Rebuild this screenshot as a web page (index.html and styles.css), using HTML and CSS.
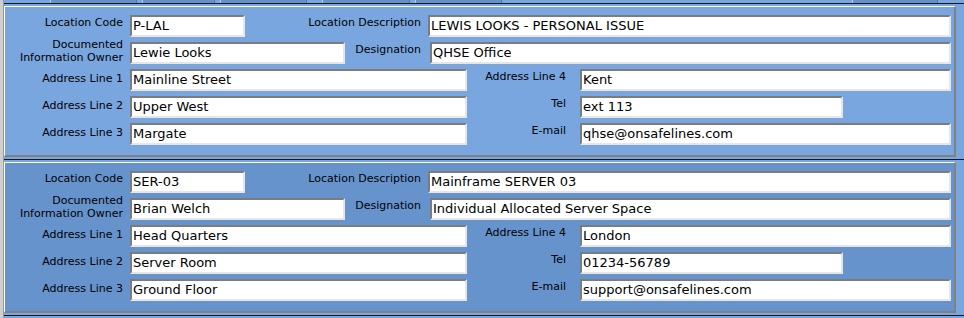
FILE: index.html
```html
<!DOCTYPE html>
<html>
<head>
<meta charset="utf-8">
<link rel="stylesheet" href="styles.css">
</head>
<body>
<div class="screen">
  <div class="main">
    <div class="tabs">
      <span class="tab t1"></span><span class="tab t2"></span><span class="tab t3"></span><span class="tab t4"></span><span class="tab t5"></span><span class="tab t6"></span>
    </div>

    <div class="record">
      <div class="panel">
        <div class="row">
          <div class="lab l1">Location Code</div>
          <div class="field w-code">P-LAL</div>
          <div class="lab l-desc">Location Description</div>
          <div class="field w-desc">LEWIS LOOKS - PERSONAL ISSUE</div>
        </div>
        <div class="row">
          <div class="lab l1 two">Documented<br>Information Owner</div>
          <div class="field w-owner">Lewie Looks</div>
          <div class="lab l-desig">Designation</div>
          <div class="field w-desig">QHSE Office</div>
        </div>
        <div class="row">
          <div class="lab l1 low">Address Line 1</div>
          <div class="field w-addr">Mainline Street</div>
          <div class="lab l-addr">Address Line 4</div>
          <div class="field w-right">Kent</div>
        </div>
        <div class="row">
          <div class="lab l1 low">Address Line 2</div>
          <div class="field w-addr">Upper West</div>
          <div class="lab l-addr">Tel</div>
          <div class="field w-tel">ext 113</div>
        </div>
        <div class="row">
          <div class="lab l1 low">Address Line 3</div>
          <div class="field w-addr">Margate</div>
          <div class="lab l-addr">E-mail</div>
          <div class="field w-right">qhse@onsafelines.com</div>
        </div>
      </div>
    </div>

    <div class="record">
      <div class="panel dark">
        <div class="row">
          <div class="lab l1">Location Code</div>
          <div class="field w-code">SER-03</div>
          <div class="lab l-desc">Location Description</div>
          <div class="field w-desc">Mainframe SERVER 03</div>
        </div>
        <div class="row">
          <div class="lab l1 two">Documented<br>Information Owner</div>
          <div class="field w-owner">Brian Welch</div>
          <div class="lab l-desig">Designation</div>
          <div class="field w-desig">Individual Allocated Server Space</div>
        </div>
        <div class="row">
          <div class="lab l1 low">Address Line 1</div>
          <div class="field w-addr">Head Quarters</div>
          <div class="lab l-addr">Address Line 4</div>
          <div class="field w-right">London</div>
        </div>
        <div class="row">
          <div class="lab l1 low">Address Line 2</div>
          <div class="field w-addr">Server Room</div>
          <div class="lab l-addr">Tel</div>
          <div class="field w-tel">01234-56789</div>
        </div>
        <div class="row">
          <div class="lab l1 low">Address Line 3</div>
          <div class="field w-addr">Ground Floor</div>
          <div class="lab l-addr">E-mail</div>
          <div class="field w-right">support@onsafelines.com</div>
        </div>
      </div>
    </div>

    <div class="record">
      <div class="panel light"></div>
    </div>
  </div>
</div>
</body>
</html>
```
FILE: styles.css
```css
html, body {
  margin: 0;
  padding: 0;
  overflow: hidden;
  background: #7aa6df;
}
.screen {
  width: 964px;
  height: 318px;
  overflow: hidden;
  border-left: 3px solid #cfcfcf;
  box-sizing: border-box;
  font-family: "DejaVu Sans", "Liberation Sans", sans-serif;
  color: #000;
}
.main {
  border-left: 1px solid #9a9a9a;
  background: #7aa6df;
  height: 100%;
}
.tabs {
  display: flex;
  height: 3px;
}
.tab {
  display: block;
  height: 3px;
  background: #6891c9;
  border-left: 1px solid #b8cdea;
  border-right: 1px solid #4f78b0;
  box-sizing: border-box;
}
.t1 { margin-left: 46px; width: 87px; }
.t2 { margin-left: 5px; width: 73px; }
.t3 { margin-left: 5px; width: 87px; }
.t4 { margin-left: 15px; width: 88px; }
.t5 { margin-left: 5px; width: 87px; }
.t6 { margin-left: 350px; width: 86px; }

.record {
  border-top: 1px solid #121a28;
  padding: 2px 0 2px;
}
.panel {
  width: 952px;
  height: 151px;
  box-sizing: border-box;
  background: #7aa6df;
  border-style: solid;
  border-width: 1px 2px 2px 1px;
  border-color: #ffffff #808080 #808080 #ffffff;
  padding: 8px 0 0 1px;
  display: flex;
  flex-direction: column;
  gap: 5px;
}
.panel.dark {
  background: #6793cd;
}
.panel.light {
  background: #d6e2f3;
}
.row {
  display: flex;
  align-items: flex-start;
  height: 22px;
}
.lab {
  font-size: 11px;
  line-height: 14px;
  text-align: right;
  white-space: nowrap;
  padding-top: 1px;
  box-sizing: border-box;
}
.lab.low { padding-top: 3px; }
.lab.two {
  line-height: 13px;
  padding-top: 0;
  margin-top: -4px;
}
.l1 { width: 117px; margin-right: 7px; }
.l-desc { width: 176px; margin-right: 7px; }
.l-desig { width: 76px; margin-right: 9px; }
.l-addr { width: 99px; margin-right: 14px; }

.field {
  height: 22px;
  box-sizing: border-box;
  background: #fff;
  border-style: solid;
  border-width: 2px;
  border-color: #7c7c7c #e6e6e6 #e6e6e6 #7c7c7c;
  font-size: 13px;
  line-height: 18px;
  padding-left: 1px;
  white-space: nowrap;
  overflow: hidden;
}
.w-code { width: 115px; }
.w-owner { width: 215px; }
.w-desc { width: 523px; }
.w-desig { width: 521px; }
.w-addr { width: 337px; }
.w-right { width: 371px; }
.w-tel { width: 263px; }
```
